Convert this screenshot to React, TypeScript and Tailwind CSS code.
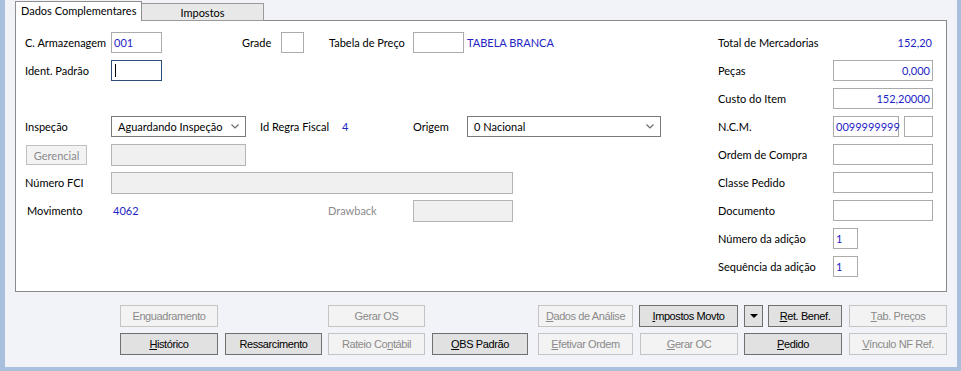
import type { ReactNode } from "react";

const valueColor = "text-[#2424c4]";

function Field({
  w,
  h = 21,
  value,
  right,
  disabled,
  focus,
}: {
  w: number;
  h?: number;
  value?: string;
  right?: boolean;
  disabled?: boolean;
  focus?: boolean;
}) {
  return (
    <div
      className={`flex shrink-0 items-center border px-[2px] ${
        right ? "justify-end" : "justify-start"
      } ${
        disabled
          ? "border-[#b4b4b4] bg-[#f0f0f0]"
          : focus
          ? "border-[#2b4f78] bg-white"
          : "border-[#ababab] bg-white"
      } ${valueColor}`}
      style={{ width: w, height: h }}
    >
      {focus && <span className="ml-[1px] h-[13px] w-px bg-black" />}
      {value}
    </div>
  );
}

function Combo({ w, text }: { w: number; text: string }) {
  return (
    <div
      className="flex h-[21px] shrink-0 items-center justify-between border border-[#7a7a7a] bg-white pl-[6px] pr-[6px] text-black"
      style={{ width: w }}
    >
      <span>{text}</span>
      <svg width="8" height="5" viewBox="0 0 8 5">
        <path d="M0.5 0.5 L4 4 L7.5 0.5" fill="none" stroke="#6a6a6a" strokeWidth="1.2" />
      </svg>
    </div>
  );
}

function Btn({
  w,
  on,
  children,
}: {
  w: number;
  on?: boolean;
  children: ReactNode;
}) {
  return (
    <button
      className={`flex h-[22px] shrink-0 items-center justify-center border font-['Liberation_Sans',Arial,sans-serif] text-[11px] tracking-[-0.4px] ${
        on
          ? "border-[#707070] bg-[#e1e1e1] text-black"
          : "border-[#c4c4c4] bg-[#f3f3f3] text-[#8a8a8a]"
      }`}
      style={{ width: w }}
    >
      {children}
    </button>
  );
}

function Row({ children }: { children: ReactNode }) {
  return <div className="flex h-[28px] items-start leading-[21px]">{children}</div>;
}

function RightRow({ label, children }: { label: string; children?: ReactNode }) {
  return (
    <div className="flex h-[28px] items-start leading-[21px]">
      <span className="w-[115px] shrink-0">{label}</span>
      {children}
    </div>
  );
}

export default function App() {
  return (
    <div className="h-[371px] w-[961px] bg-[#a8c0dc] pb-[4px] pl-[5px] pr-[4px] font-['Lato','Segoe_UI',sans-serif] text-[11px] text-black">
      <div className="h-full bg-[#f1f3f8] pl-[10px] pt-px">
        <div className="flex h-[20px] items-end">
          <div className="relative z-10 h-[20px] w-[127px] border border-b-0 border-[#8e8e8e] bg-white pl-[5px] leading-[18px]">
            Dados Complementares
          </div>
          <div className="h-[18px] w-[122px] border border-l-0 border-[#9a9a9a] bg-[#e8e8e8] text-center leading-[18px]">
            Impostos
          </div>
        </div>

        <div className="-mt-px flex h-[272px] w-[932px] border border-[#8a8a8a] bg-white pl-[9px] pt-[11px]">
          <div className="w-[693px] shrink-0">
            <Row>
              <span className="w-[86px] shrink-0">C. Armazenagem</span>
              <Field w={51} value="001" />
              <span className="ml-[80px] w-[39px] shrink-0">Grade</span>
              <Field w={23} />
              <span className="ml-[25px] w-[84px] shrink-0">Tabela de Preço</span>
              <Field w={51} />
              <span className={`ml-[3px] ${valueColor}`}>TABELA BRANCA</span>
            </Row>
            <Row>
              <span className="w-[86px] shrink-0">Ident. Padrão</span>
              <Field w={51} focus />
            </Row>
            <Row>{null}</Row>
            <Row>
              <span className="w-[86px] shrink-0">Inspeção</span>
              <Combo w={135} text="Aguardando Inspeção" />
              <span className="ml-[14px] w-[82px] shrink-0">Id Regra Fiscal</span>
              <span className={`w-[71px] shrink-0 ${valueColor}`}>4</span>
              <span className="w-[54px] shrink-0">Origem</span>
              <Combo w={194} text="0 Nacional" />
            </Row>
            <Row>
              <button className="ml-[1px] mt-px flex h-[20px] w-[61px] shrink-0 items-center justify-center border border-[#c0c0c0] bg-[#f3f3f3] text-[#8a8a8a]">
                Gerencial
              </button>
              <div className="ml-[24px]">
                <Field w={135} h={22} disabled />
              </div>
            </Row>
            <Row>
              <span className="w-[86px] shrink-0">Número FCI</span>
              <Field w={402} h={22} disabled />
            </Row>
            <Row>
              <span className="ml-[2px] w-[86px] shrink-0">Movimento</span>
              <span className={`w-[215px] shrink-0 ${valueColor}`}>4062</span>
              <span className="w-[85px] shrink-0 text-[#8a8a8a]">Drawback</span>
              <Field w={100} h={22} disabled />
            </Row>
          </div>

          <div className="w-[215px] shrink-0">
            <div className="flex h-[28px] items-start justify-between pr-[1px] leading-[21px]">
              <span>Total de Mercadorias</span>
              <span className={valueColor}>152,20</span>
            </div>
            <RightRow label="Peças">
              <Field w={100} value="0,000" right />
            </RightRow>
            <RightRow label="Custo do Item">
              <Field w={100} value="152,20000" right />
            </RightRow>
            <RightRow label="N.C.M.">
              <Field w={66} value="0099999999" />
              <div className="ml-[5px]">
                <Field w={29} />
              </div>
            </RightRow>
            <RightRow label="Ordem de Compra">
              <Field w={100} />
            </RightRow>
            <RightRow label="Classe Pedido">
              <Field w={100} />
            </RightRow>
            <RightRow label="Documento">
              <Field w={100} />
            </RightRow>
            <RightRow label="Número da adição">
              <Field w={25} value="1" />
            </RightRow>
            <RightRow label="Sequência da adição">
              <Field w={25} value="1" />
            </RightRow>
          </div>
        </div>

        <div className="ml-[105px] mt-[13px] flex flex-col gap-[6px]">
          <div className="flex">
            <Btn w={98}>
              En<u>g</u>uadramento
            </Btn>
            <div className="w-[110px] shrink-0" />
            <Btn w={97}>Gerar OS</Btn>
            <div className="w-[113px] shrink-0" />
            <Btn w={95}>
              <u>D</u>ados de Análise
            </Btn>
            <div className="ml-[6px]">
              <Btn w={99} on>
                <u>I</u>mpostos Movto
              </Btn>
            </div>
            <div className="ml-[6px]">
              <Btn w={19} on>
                <span className="h-0 w-0 border-x-[4px] border-t-[4px] border-x-transparent border-t-black" />
              </Btn>
            </div>
            <div className="ml-[5px]">
              <Btn w={74} on>
                <u>R</u>et. Benef.
              </Btn>
            </div>
            <div className="ml-[7px]">
              <Btn w={98}>
                <u>T</u>ab. Preços
              </Btn>
            </div>
          </div>
          <div className="flex">
            <Btn w={98} on>
              <u>H</u>istórico
            </Btn>
            <div className="ml-[7px]">
              <Btn w={97} on>
                Ressarcimento
              </Btn>
            </div>
            <div className="ml-[6px]">
              <Btn w={97}>
                Rateio Co<u>n</u>tábil
              </Btn>
            </div>
            <div className="ml-[7px]">
              <Btn w={96} on>
                <u>O</u>BS Padrão
              </Btn>
            </div>
            <div className="ml-[10px]">
              <Btn w={95}>
                <u>E</u>fetivar Ordem
              </Btn>
            </div>
            <div className="ml-[7px]">
              <Btn w={98}>
                <u>G</u>erar OC
              </Btn>
            </div>
            <div className="ml-[6px]">
              <Btn w={98} on>
                <u>P</u>edido
              </Btn>
            </div>
            <div className="ml-[7px]">
              <Btn w={98}>
                <u>V</u>ínculo NF Ref.
              </Btn>
            </div>
          </div>
        </div>
      </div>
    </div>
  );
}
